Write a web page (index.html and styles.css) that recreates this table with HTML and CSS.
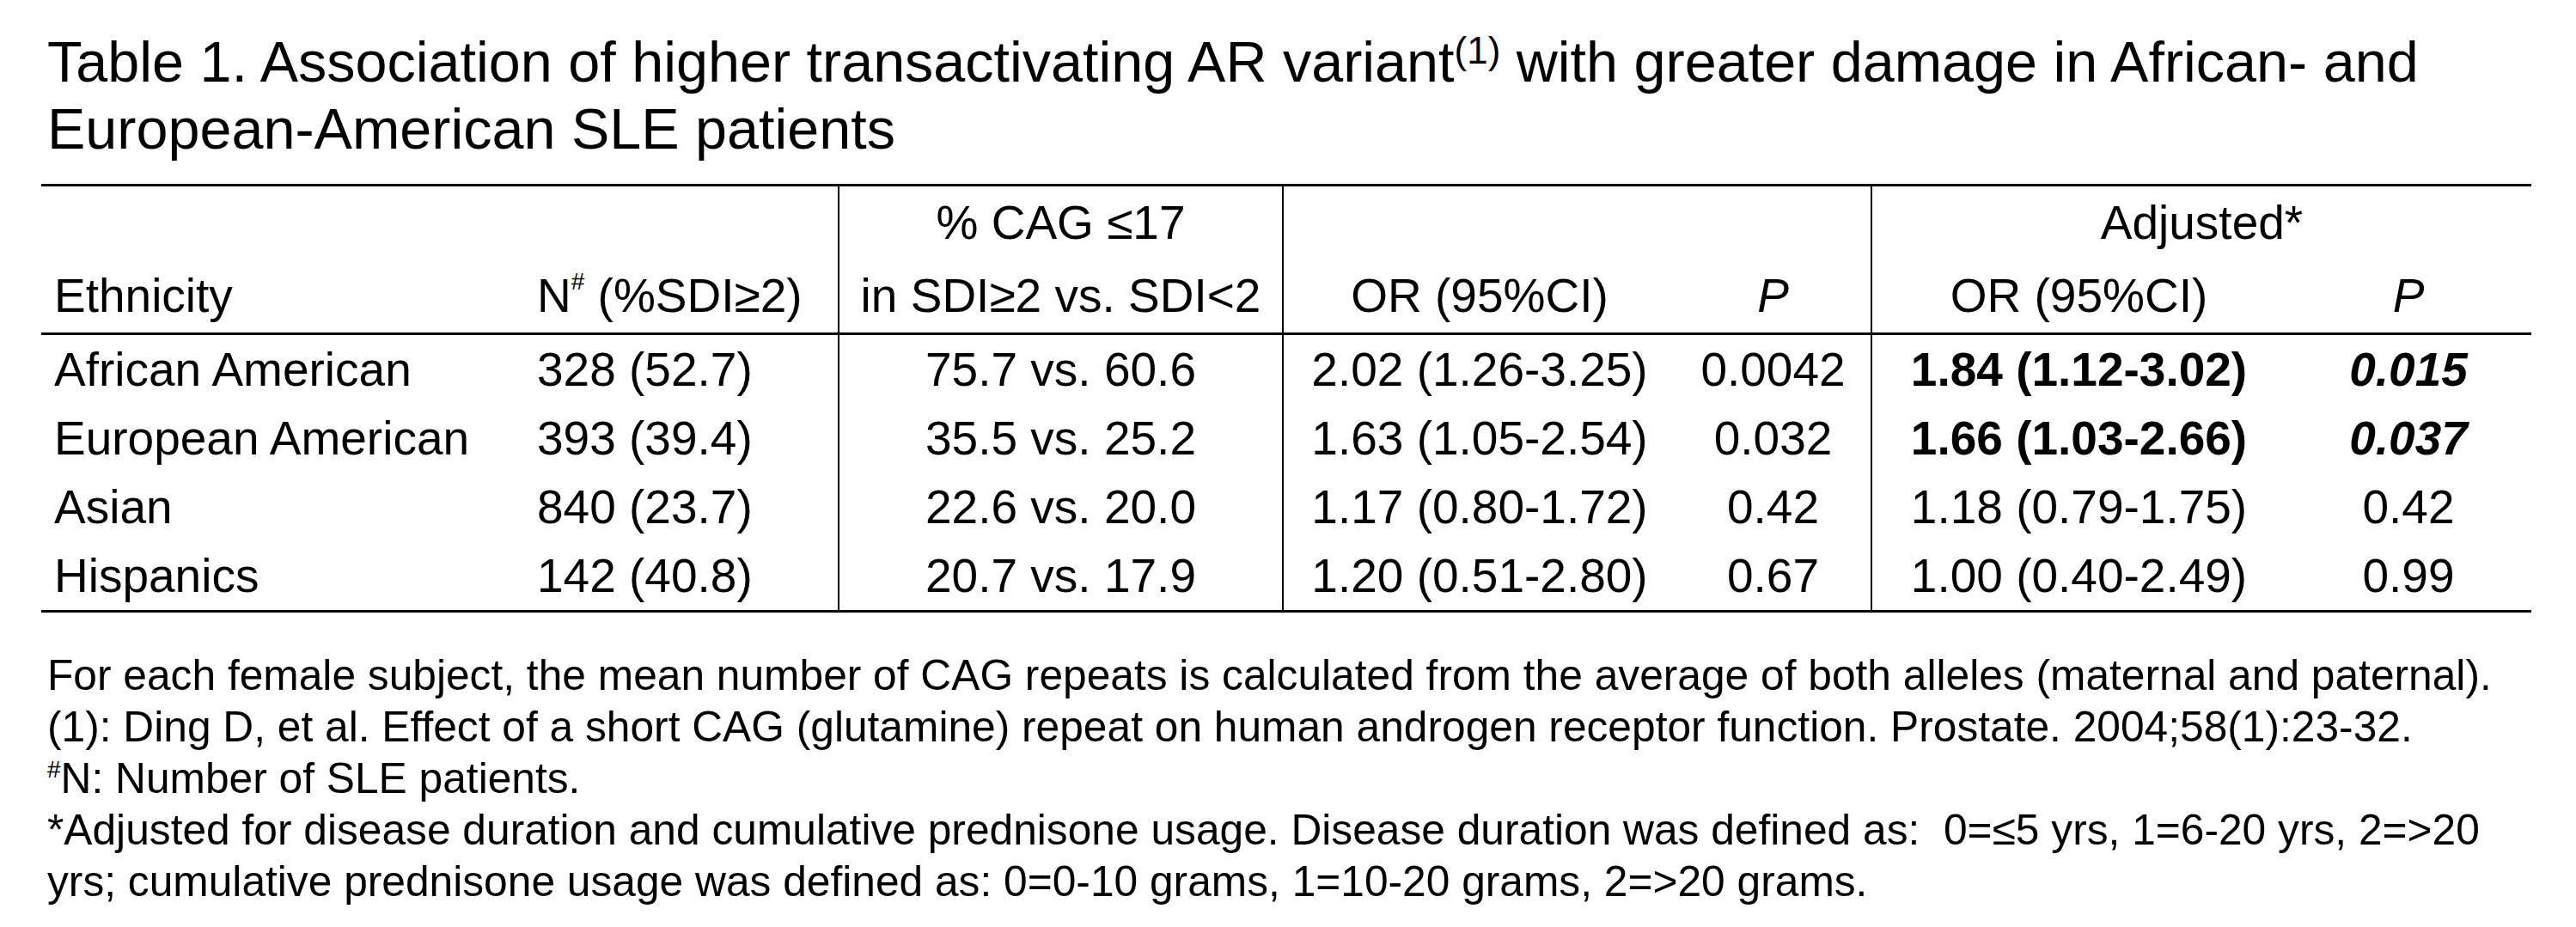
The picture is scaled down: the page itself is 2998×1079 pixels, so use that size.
FILE: index.html
```html
<!DOCTYPE html>
<html lang="en">
<head>
<meta charset="utf-8">
<title>Table 1</title>
<link rel="stylesheet" href="styles.css">
</head>
<body>
<div class="page">
  <h1 class="title">Table 1. Association of higher transactivating AR variant<sup class="tsup">(1)</sup> with greater damage in African- and<br>European-American SLE patients</h1>
  <table class="data">
    <colgroup>
      <col class="c1"><col class="c2"><col class="c3"><col class="c4"><col class="c5"><col class="c6"><col class="c7">
    </colgroup>
    <thead>
      <tr class="h1">
        <th class="left"></th>
        <th class="left"></th>
        <th class="vl vr">% CAG ≤17</th>
        <th></th>
        <th></th>
        <th class="vl" colspan="2">Adjusted*</th>
      </tr>
      <tr class="h2">
        <th class="left">Ethnicity</th>
        <th class="left">N<sup class="hsup">#</sup> (%SDI≥2)</th>
        <th class="vl vr">in SDI≥2 vs. SDI&lt;2</th>
        <th>OR (95%CI)</th>
        <th><i>P</i></th>
        <th class="vl">OR (95%CI)</th>
        <th><i>P</i></th>
      </tr>
    </thead>
    <tbody>
      <tr>
        <td class="left">African American</td>
        <td class="left">328 (52.7)</td>
        <td class="vl vr">75.7 vs. 60.6</td>
        <td>2.02 (1.26-3.25)</td>
        <td>0.0042</td>
        <td class="vl"><b>1.84 (1.12-3.02)</b></td>
        <td><b><i>0.015</i></b></td>
      </tr>
      <tr>
        <td class="left">European American</td>
        <td class="left">393 (39.4)</td>
        <td class="vl vr">35.5 vs. 25.2</td>
        <td>1.63 (1.05-2.54)</td>
        <td>0.032</td>
        <td class="vl"><b>1.66 (1.03-2.66)</b></td>
        <td><b><i>0.037</i></b></td>
      </tr>
      <tr>
        <td class="left">Asian</td>
        <td class="left">840 (23.7)</td>
        <td class="vl vr">22.6 vs. 20.0</td>
        <td>1.17 (0.80-1.72)</td>
        <td>0.42</td>
        <td class="vl">1.18 (0.79-1.75)</td>
        <td>0.42</td>
      </tr>
      <tr>
        <td class="left">Hispanics</td>
        <td class="left">142 (40.8)</td>
        <td class="vl vr">20.7 vs. 17.9</td>
        <td>1.20 (0.51-2.80)</td>
        <td>0.67</td>
        <td class="vl">1.00 (0.40-2.49)</td>
        <td>0.99</td>
      </tr>
    </tbody>
  </table>
  <div class="notes">
    <p>For each female subject, the mean number of CAG repeats is calculated from the average of both alleles (maternal and paternal).</p>
    <p>(1): Ding D, et al. Effect of a short CAG (glutamine) repeat on human androgen receptor function. Prostate. 2004;58(1):23-32.</p>
    <p><sup class="nsup">#</sup>N: Number of SLE patients.</p>
    <p>*Adjusted for disease duration and cumulative prednisone usage. Disease duration was defined as: &nbsp;0=≤5 yrs, 1=6-20 yrs, 2=&gt;20<br>yrs; cumulative prednisone usage was defined as: 0=0-10 grams, 1=10-20 grams, 2=&gt;20 grams.</p>
  </div>
</div>
</body>
</html>
```
FILE: styles.css
```css
html, body {
  margin: 0;
  padding: 0;
  background: #fff;
}

body {
  font-family: "Liberation Sans", Arial, sans-serif;
  color: #000;
}

.page {
  width: 2998px;
  padding: 33px 0 0 0;
  box-sizing: border-box;
}

.title {
  margin: 0 0 0 55px;
  font-size: 66.5px;
  font-weight: normal;
  line-height: 78px;
}

.tsup {
  font-size: 44px;
  line-height: 0;
  vertical-align: 21px;
}

.data {
  margin: 25px 0 0 48px;
  width: 2898px;
  border-collapse: collapse;
  table-layout: fixed;
  font-size: 55px;
  line-height: 80px;
}

.c1 { width: 562px; }
.c2 { width: 366px; }
.c3 { width: 517px; }
.c4 { width: 457px; }
.c5 { width: 228px; }
.c6 { width: 482px; }
.c7 { width: 286px; }

.data th,
.data td {
  padding: 0;
  text-align: center;
  white-space: nowrap;
  font-weight: normal;
}

.data th {
  padding: 2px 0 3px 0;
}

.data .left {
  text-align: left;
  padding-left: 15px;
}

.data .h1 th {
  border-top: 3px solid #000;
}

.data .h2 th {
  border-bottom: 3px solid #000;
}

.data tbody tr:last-child td {
  border-bottom: 3px solid #000;
}

.data .vl {
  border-left: 2px solid #000;
}

.data .vr {
  border-right: 2px solid #000;
}

.data b {
  font-weight: bold;
}

.hsup {
  font-size: 28px;
  line-height: 0;
  vertical-align: 26px;
}

.notes {
  margin: 43px 0 0 55px;
  font-size: 49.7px;
  line-height: 60px;
}

.notes p {
  margin: 0;
  white-space: nowrap;
}

.nsup {
  font-size: 28px;
  line-height: 0;
  vertical-align: 18px;
}
```
